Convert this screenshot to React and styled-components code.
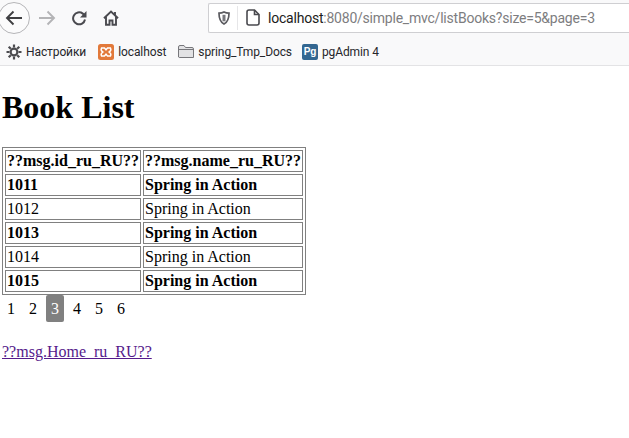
import React from "react";
import styled, { createGlobalStyle } from "styled-components";

const Global = createGlobalStyle`
  html, body { margin: 0; padding: 0; background: #fff; }
  body { width: 629px; height: 438px; overflow: hidden; font-family: "Liberation Serif", serif; font-size: 16px; color: #000; }
`;

const Chrome = styled.header`
  height: 65px;
  background: #f9f9fa;
  border-bottom: 1px solid #e3e3e5;
  font-family: Roboto, "Open Sans", sans-serif;
`;
const NavBar = styled.div`
  height: 35px;
  display: flex;
  align-items: center;
  overflow: hidden;
`;
const BackButton = styled.div`
  width: 32px;
  height: 32px;
  box-sizing: border-box;
  margin-left: -2px;
  border: 1px solid #b5b5b8;
  border-radius: 50%;
  background: #fbfbfc;
  display: flex;
  align-items: center;
  justify-content: center;
  flex: none;
`;
const NavIcon = styled.div`
  width: 22px;
  height: 22px;
  flex: none;
  margin-left: ${(p) => p.$gap}px;
  display: flex;
  align-items: center;
  justify-content: center;
`;
const UrlBox = styled.div`
  margin-left: 86px;
  width: 429px;
  height: 30px;
  box-sizing: border-box;
  border: 1px solid #cfcfd2;
  border-right: none;
  border-radius: 2px 0 0 2px;
  background: #fff;
  display: flex;
  align-items: center;
  padding-left: 9px;
  flex: none;
`;
const Divider = styled.span`
  width: 1px;
  height: 24px;
  background: #e6e6e8;
  margin: 0 8px 0 7px;
`;
const Url = styled.span`
  font-size: 14px;
  margin-left: 8px;
  color: #7d7d80;
  white-space: nowrap;
  letter-spacing: -0.22px;
`;
const Host = styled.span`
  color: #1c1c20;
`;
const Bookmarks = styled.nav`
  height: 30px;
  padding: 4px 0 0 6px;
  box-sizing: border-box;
  display: flex;
  align-items: center;
`;
const Bookmark = styled.span`
  display: flex;
  align-items: center;
  gap: 4px;
  font-size: 12px;
  letter-spacing: -0.1px;
  color: #26262a;
  margin-right: ${(p) => p.$gap}px;
  white-space: nowrap;
`;
const PgBadge = styled.span`
  width: 16px;
  height: 16px;
  border-radius: 2px;
  background: #336791;
  color: #fff;
  font: bold 10px/16px "Liberation Sans", sans-serif;
  text-align: center;
`;
const Page = styled.main`
  padding: 0 2px;
`;
const Title = styled.h1`
  font-size: 32px;
  font-weight: bold;
  margin: 23px 0 21px;
  line-height: 37px;
`;
const BookTable = styled.table`
  border: 1px solid #808080;
  border-spacing: 2px;
  border-collapse: separate;
`;
const Cell = styled.td`
  border: 1px solid #808080;
  padding: 1px;
  font-weight: ${(p) => (p.$bold ? "bold" : "normal")};
  line-height: 18px;
  height: 18px;
`;
const HeadCell = styled(Cell).attrs({ as: "th" })`
  font-weight: bold;
  text-align: left;
`;
const Pager = styled.div`
  height: 28px;
  line-height: 18px;
  padding-top: 5px;
  box-sizing: border-box;
`;
const PageLink = styled.a`
  padding: 5px;
  color: ${(p) => (p.$active ? "#fff" : "#000")};
  background: ${(p) => (p.$active ? "#808080" : "transparent")};
  border-radius: 2px;
`;
const HomeLink = styled.a`
  display: inline-block;
  margin-top: 20px;
  color: #551a8b;
  text-decoration: underline;
  line-height: 18px;
`;

const rows = [
  [1011, true],
  [1012, false],
  [1013, true],
  [1014, false],
  [1015, true],
];

export default function App() {
  return (
    <>
      <Global />
      <Chrome>
        <NavBar>
          <BackButton>
            <svg width="18" height="18" viewBox="0 0 18 18" fill="none" stroke="#3f3f42" strokeWidth="1.900">
              <path d="M17 9H2M8.500 2.500 2 9l6.500 6.500" />
            </svg>
          </BackButton>
          <NavIcon $gap={6}>
            <svg width="18" height="18" viewBox="0 0 18 18" fill="none" stroke="#b4b4b6" strokeWidth="1.900">
              <path d="M1 9h15M9.500 2.500 16 9l-6.500 6.500" />
            </svg>
          </NavIcon>
          <NavIcon $gap={10}>
            <svg width="16" height="16" viewBox="0 0 16 16" fill="none" stroke="#4a4a4f" strokeWidth="2">
              <path d="M14 9.500A6 6 0 1 1 11.800 3.600L14 6" />
              <path d="M15.500 1V7.500H9Z" fill="#4a4a4f" stroke="none" />
            </svg>
          </NavIcon>
          <NavIcon $gap={10}>
            <svg width="16" height="16" viewBox="0 0 16 16" fill="none" stroke="#4a4a4f" strokeWidth="1.900">
              <path d="M1 8.200 8 1.500l7 6.700" />
              <path d="M3 7v7.800h3.500v-4.300h3v4.300H13V7" />
              <path d="M12 2v3" />
            </svg>
          </NavIcon>
          <UrlBox>
            <svg width="12" height="14" viewBox="0 0 12 14" fill="none" stroke="#5a5a5f" strokeWidth="1.700">
              <path d="M6 1c1.700.9 3.300 1.200 5 1.200 0 4.500-.9 8.600-5 10.800C1.900 10.800 1 6.700 1 2.200 2.700 2.200 4.300 1.900 6 1Z" />
              <path d="M6 3.800v6.500" strokeWidth="3" stroke="#77777c" />
            </svg>
            <Divider />
            <svg width="14" height="17" viewBox="0 0 14 17" fill="none" stroke="#4a4a4f" strokeWidth="1.600">
              <path d="M3 1h5.500L13 5.500v8.500a2 2 0 0 1-2 2H3a2 2 0 0 1-2-2V3a2 2 0 0 1 2-2Z" />
              <path d="M8.500 1v4.500H13" />
            </svg>
            <Url>
              <Host>localhost</Host>:8080/simple_mvc/listBooks?size=5&amp;page=3
            </Url>
          </UrlBox>
        </NavBar>
        <Bookmarks>
          <Bookmark $gap={12}>
            <svg width="16" height="16" viewBox="0 0 16 16" fill="none" stroke="#4c4c50">
              <circle cx="8" cy="8" r="3.400" strokeWidth="2.200" />
              <path d="M8 .5v3M8 12.500v3M.5 8h3M12.500 8h3M2.700 2.700l2.100 2.100M11.200 11.200l2.100 2.100M13.300 2.700l-2.100 2.100M4.800 11.200l-2.100 2.100" strokeWidth="2.200" />
            </svg>
            Настройки
          </Bookmark>
          <Bookmark $gap={12}>
            <svg width="16" height="16" viewBox="0 0 16 16">
              <rect width="16" height="16" rx="2.500" fill="#e2793a" />
              <path d="M3.500 4h3L8 5.800 9.500 4h3c.8 1.500-.1 3.200-1.500 4 1.400.8 2.300 2.500 1.500 4h-3L8 10.200 6.500 12h-3C2.700 10.500 3.600 8.800 5 8 3.600 7.200 2.700 5.500 3.500 4Z" fill="none" stroke="#fff" strokeWidth="1.400" />
            </svg>
            localhost
          </Bookmark>
          <Bookmark $gap={10}>
            <svg width="16" height="14" viewBox="0 0 16 14" fill="#e2e2e4" stroke="#77777b">
              <path d="M.5 12V2A1.500 1.500 0 0 1 2 .5h4L7.500 2.500H14A1.500 1.500 0 0 1 15.500 4v8.500H2A1.500 1.500 0 0 1 .5 12Z" />
              <path d="M.5 4.500h15" fill="none" />
            </svg>
            spring_Tmp_Docs
          </Bookmark>
          <Bookmark>
            <PgBadge>Pg</PgBadge>
            pgAdmin 4
          </Bookmark>
        </Bookmarks>
      </Chrome>
      <Page>
        <Title>Book List</Title>
        <BookTable>
          <thead>
            <tr>
              <HeadCell>??msg.id_ru_RU??</HeadCell>
              <HeadCell>??msg.name_ru_RU??</HeadCell>
            </tr>
          </thead>
          <tbody>
            {rows.map(([id, bold]) => (
              <tr key={id}>
                <Cell $bold={bold}>{id}</Cell>
                <Cell $bold={bold}>Spring in Action</Cell>
              </tr>
            ))}
          </tbody>
        </BookTable>
        <Pager>
          {[1, 2, 3, 4, 5, 6].map((n, i) => (
            <React.Fragment key={n}>
              {i > 0 && " "}
              <PageLink $active={n === 3}>{n}</PageLink>
            </React.Fragment>
          ))}
        </Pager>
        <HomeLink href="#">??msg.Home_ru_RU??</HomeLink>
      </Page>
    </>
  );
}
